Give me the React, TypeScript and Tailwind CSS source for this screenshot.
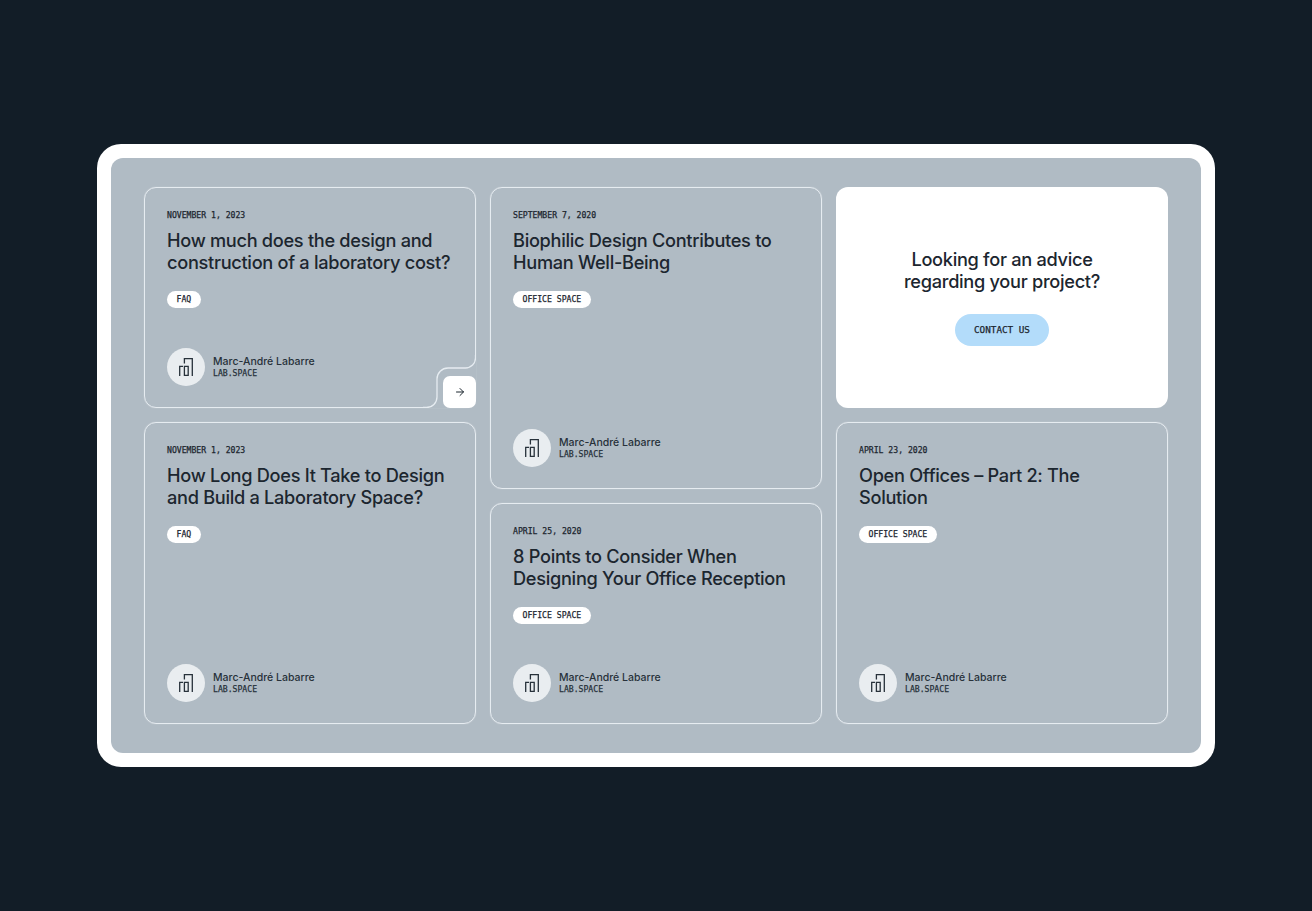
import { ArrowRight } from "lucide-react";

const SANS = "font-['Inter','Noto_Sans',sans-serif]";
const MONO = "font-['DejaVu_Sans_Mono','Liberation_Mono',monospace] [-webkit-text-stroke:0.25px_currentColor]";

interface PostProps {
  date: string;
  title: string[];
  tag: string;
  tall?: boolean;
  notch?: boolean;
}

function Logo() {
  return (
    <div className="w-[38px] h-[38px] rounded-full bg-[#e9edf0] flex items-center justify-center shrink-0">
      <svg width="14" height="18" viewBox="0 0 14 18" fill="none" stroke="#27313a" strokeWidth="1.3">
        <path d="M0.7 18V8.3H4" />
        <path d="M5.4 8.3H9.2V17.3H5.4Z" />
        <path d="M5.4 5.5V0.7H13.3V18" />
      </svg>
    </div>
  );
}

function Notch() {
  return (
    <div className="absolute right-[-1px] bottom-[-1px] w-[53px] h-[53px] bg-[#b0bbc4]">
      <svg className="absolute inset-0" width="53" height="53" viewBox="0 0 53 53" fill="none" stroke="#e6ecf1" strokeWidth="1.3">
        <path d="M52.5 0V3A10 10 0 0 1 42.5 13H25A11 11 0 0 0 14 24V42A10.5 10.5 0 0 1 3.5 52.5H0" />
      </svg>
      <button className="absolute right-0 bottom-0 w-[33px] h-[32px] rounded-[7px] bg-white flex items-center justify-center text-[#1a242d]">
        <ArrowRight className="w-[12px] h-[12px]" strokeWidth={2} />
      </button>
    </div>
  );
}

function Post({ date, title, tag, tall, notch }: PostProps) {
  return (
    <div className={`relative ${tall ? "h-[302px]" : "h-[221px]"} rounded-[12px] border border-[#e6ecf1] shadow-[0_0_1px_rgba(255,255,255,0.6)] pt-[21px] pl-[22px] pr-[20px] pb-[21px] flex flex-col`}>
      <div className={`${MONO} text-[8.15px] leading-[12px] font-normal text-[#1c262f]`}>{date}</div>
      <h2 className={`${SANS} mt-[8px] text-[18.2px] leading-[22px] tracking-[-0.3px] font-medium text-[#1c262f]`}>
        {title.map((line) => (
          <div key={line} className="whitespace-nowrap">{line}</div>
        ))}
      </h2>
      <div className="mt-[18px] flex">
        <span className={`${MONO} h-[17px] px-[9.5px] rounded-full bg-white text-[8.15px] leading-[17px] font-normal text-[#1c262f]`}>{tag}</span>
      </div>
      <div className="mt-auto flex items-center gap-[8px]">
        <Logo />
        <div>
          <div className={`${SANS} text-[10.5px] leading-[13px] font-medium text-[#27313a]`}>Marc-André Labarre</div>
          <div className={`${MONO} text-[8.15px] leading-[11px] font-normal text-[#27313a]`}>LAB.SPACE</div>
        </div>
      </div>
      {notch && <Notch />}
    </div>
  );
}

export default function App() {
  return (
    <div className="w-[1312px] h-[911px] bg-[#121d27] pt-[144px] pl-[97px]">
      <div className="w-[1118px] h-[623px] rounded-[24px] bg-white p-[14px]">
        <div className="h-full rounded-[12px] bg-[#b0bbc4] pt-[29px] pl-[33px] flex gap-[14px]">
          <div className="w-[332px] flex flex-col gap-[14px]">
            <Post date="NOVEMBER 1, 2023" title={["How much does the design and", "construction of a laboratory cost?"]} tag="FAQ" notch />
            <Post date="NOVEMBER 1, 2023" title={["How Long Does It Take to Design", "and Build a Laboratory Space?"]} tag="FAQ" tall />
          </div>
          <div className="w-[332px] flex flex-col gap-[14px]">
            <Post date="SEPTEMBER 7, 2020" title={["Biophilic Design Contributes to", "Human Well-Being"]} tag="OFFICE SPACE" tall />
            <Post date="APRIL 25, 2020" title={["8 Points to Consider When", "Designing Your Office Reception"]} tag="OFFICE SPACE" />
          </div>
          <div className="w-[332px] flex flex-col gap-[14px]">
            <div className="h-[221px] rounded-[12px] bg-white flex flex-col items-center pt-[61px]">
              <h2 className={`${SANS} text-[18.2px] leading-[22px] tracking-[-0.3px] font-medium text-center text-[#1c262f]`}>
                Looking for an advice<br />regarding your project?
              </h2>
              <button className={`${MONO} mt-[22px] h-[32px] w-[94px] rounded-full bg-[#b3dcfa] text-[9.3px] font-normal text-[#1c262f]`}>CONTACT US</button>
            </div>
            <Post date="APRIL 23, 2020" title={["Open Offices – Part 2: The", "Solution"]} tag="OFFICE SPACE" tall />
          </div>
        </div>
      </div>
    </div>
  );
}
